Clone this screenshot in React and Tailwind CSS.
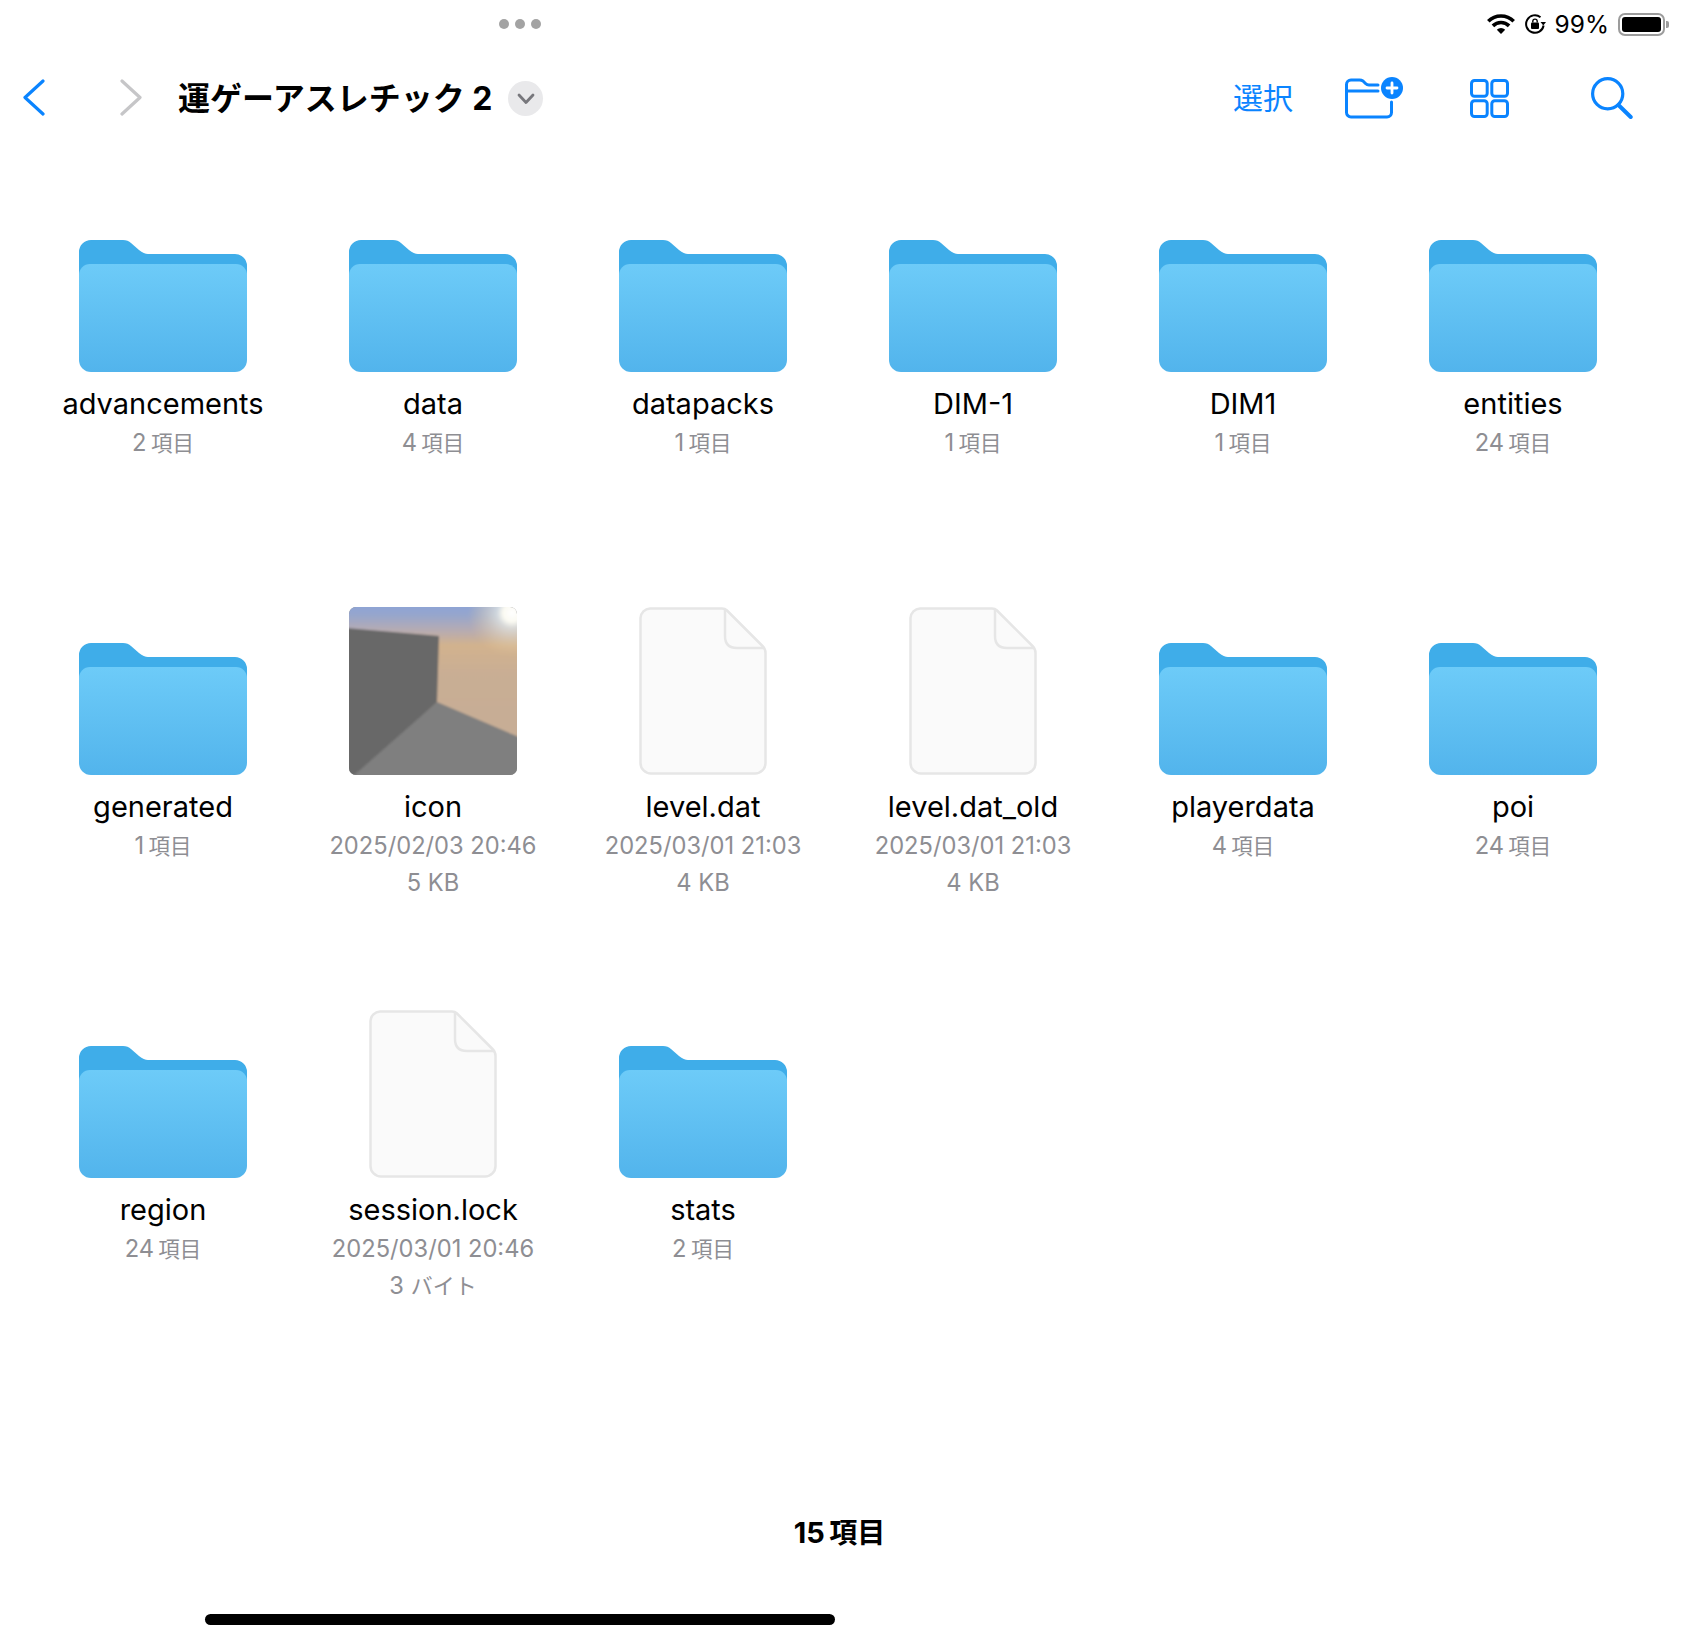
const SANS = "font-['Inter','Noto_Sans_CJK_JP',sans-serif]";

function Folder() {
  return (
    <svg width="168" height="132" viewBox="0 0 168 132">
      <defs>
        <linearGradient id="ff" x1="0" y1="0" x2="0" y2="1">
          <stop offset="0" stopColor="#6dcbf8" />
          <stop offset="1" stopColor="#52b4ec" />
        </linearGradient>
      </defs>
      <path d="M0 12 A12 12 0 0 1 12 0 H44 Q49 0 52 3 L60 10 Q65 14 69 14 H156 A12 12 0 0 1 168 26 V60 H0 Z" fill="#3fade9" />
      <path d="M0 35 A11 11 0 0 1 11 24 H157 A11 11 0 0 1 168 35 V120 A12 12 0 0 1 156 132 H12 A12 12 0 0 1 0 120 Z" fill="url(#ff)" />
    </svg>
  );
}

function Doc() {
  return (
    <svg width="128" height="168" viewBox="0 0 128 168">
      <path d="M11 1.5 H83 Q86 1.5 88 3.5 L123.5 39 Q126.5 42 126.5 46 V156 A10.5 10.5 0 0 1 116 166.5 H12 A10.5 10.5 0 0 1 1.5 156 V11 A10 10 0 0 1 11 1.5 Z" fill="#fafafa" stroke="#e6e6e6" strokeWidth="2.5" />
      <path d="M86 3 V29 Q86 41 98 41 H125" fill="none" stroke="#e6e6e6" strokeWidth="2.5" />
    </svg>
  );
}

function Thumb() {
  return (
    <svg width="168" height="168" viewBox="0 0 168 168" className="rounded-[7px]">
      <defs>
        <linearGradient id="bgsky" x1="0" y1="0" x2="0" y2="1">
          <stop offset="0" stopColor="#8aa3d8" />
          <stop offset="0.07" stopColor="#97a6cc" />
          <stop offset="0.15" stopColor="#b4abb4" />
          <stop offset="0.24" stopColor="#d2b28e" />
          <stop offset="0.4" stopColor="#c9ae94" />
          <stop offset="1" stopColor="#c5ad97" />
        </linearGradient>
        <radialGradient id="sun" cx="163" cy="6" r="44" gradientUnits="userSpaceOnUse">
          <stop offset="0" stopColor="#ffffff" />
          <stop offset="0.2" stopColor="#fbfaf2" />
          <stop offset="0.35" stopColor="#eef0e6" stopOpacity="0.65" />
          <stop offset="1" stopColor="#e8c890" stopOpacity="0" />
        </radialGradient>
        <filter id="bl"><feGaussianBlur stdDeviation="1" /></filter>
      </defs>
      <rect width="168" height="168" fill="#808080" />
      <g filter="url(#bl)">
        <rect x="-4" y="-4" width="176" height="176" fill="url(#bgsky)" />
        <rect x="-4" y="-4" width="176" height="90" fill="url(#sun)" />
        <polygon points="88,95 172,131 172,172 -4,172" fill="#7f7f7f" />
        <polygon points="-4,21 90,29 88,95 3,170 -4,172" fill="#676767" />
      </g>
    </svg>
  );
}

function Item({ name, kind, subs }) {
  return (
    <div className="h-[403px] flex flex-col items-center">
      <div className="h-[168px] flex items-end">
        {kind === "folder" && <Folder />}
        {kind === "doc" && <Doc />}
        {kind === "thumb" && <Thumb />}
      </div>
      <div className="mt-[14px] text-[29px] leading-[36px] text-black whitespace-nowrap">{name}</div>
      <div className="mt-[3px] flex flex-col items-center gap-[1px]">
        {subs.map((s, i) => (
          <div key={i} className="text-[23.7px] leading-[36px] text-[#8e8e93] whitespace-nowrap">{s}</div>
        ))}
      </div>
    </div>
  );
}

const K = (n) => (
  <>
    {n}&#8201;<span className="text-[21.5px]">項目</span>
  </>
);

const items = [
  ["advancements", "folder", [K("2")]],
  ["data", "folder", [K("4")]],
  ["datapacks", "folder", [K("1")]],
  ["DIM-1", "folder", [K("1")]],
  ["DIM1", "folder", [K("1")]],
  ["entities", "folder", [K("24")]],
  ["generated", "folder", [K("1")]],
  ["icon", "thumb", ["2025/02/03 20:46", "5 KB"]],
  ["level.dat", "doc", ["2025/03/01 21:03", "4 KB"]],
  ["level.dat_old", "doc", ["2025/03/01 21:03", "4 KB"]],
  ["playerdata", "folder", [K("4")]],
  ["poi", "folder", [K("24")]],
  ["region", "folder", [K("24")]],
  ["session.lock", "doc", ["2025/03/01 20:46", <>3 <span className="text-[22px]">バイト</span></>]],
  ["stats", "folder", [K("2")]],
];

export default function App() {
  return (
    <div className={`w-[1700px] h-[1640px] relative overflow-hidden bg-white ${SANS}`}>
      <div className="h-[48px] flex items-center">
        <div className="ml-[499px] flex gap-[6px]">
          <span className="w-[10px] h-[10px] rounded-full bg-[#a3a3a3]" />
          <span className="w-[10px] h-[10px] rounded-full bg-[#a3a3a3]" />
          <span className="w-[10px] h-[10px] rounded-full bg-[#a3a3a3]" />
        </div>
        <div className="ml-auto mr-[31px] flex items-center">
          <svg width="28" height="20" viewBox="0 0 28 20">
            <path d="M1.3 7.3 A18 18 0 0 1 26.7 7.3" fill="none" stroke="#000" strokeWidth="3.6" />
            <path d="M5.9 11.9 A11.5 11.5 0 0 1 22.1 11.9" fill="none" stroke="#000" strokeWidth="3.6" />
            <path d="M14 20 L9.8 15.8 A6 6 0 0 1 18.2 15.8 Z" fill="#000" />
          </svg>
          <svg width="21" height="20" viewBox="0 0 21 20" className="ml-[10px]">
            <path d="M15.5 3.2 A8.8 8.8 0 1 0 18.6 11.5" fill="none" stroke="#000" strokeWidth="2" />
            <path d="M15.5 8 L21 8 L18.3 11.5 Z" fill="#000" />
            <rect x="6" y="8.5" width="8" height="6.5" rx="1" fill="#000" />
            <path d="M7.8 8.5 V7.3 A2.2 2.2 0 0 1 12.2 7.3 V8.5" fill="none" stroke="#000" strokeWidth="1.4" />
          </svg>
          <span className="ml-[9px] text-[24.5px] leading-[30px] text-black">99%</span>
          <div className="ml-[9px] w-[47px] h-[23px] rounded-[7px] border-2 border-[#9c9c9c] p-[2px] flex">
            <div className="flex-1 bg-black rounded-[3px]" />
          </div>
          <div className="w-[3px] h-[7px] ml-[1px] rounded-r-[2px] bg-[#9c9c9c]" />
        </div>
      </div>

      <div className="h-[100px] flex items-center">
        <svg width="22" height="37" viewBox="0 0 22 37" className="ml-[23px] -mt-[1px]">
          <path d="M20 2 L2 18.5 L20 35" fill="none" stroke="#0a84ff" strokeWidth="3.2" strokeLinecap="round" strokeLinejoin="round" />
        </svg>
        <svg width="22" height="37" viewBox="0 0 22 37" className="ml-[75px] -mt-[1px]">
          <path d="M2 2 L20 18.5 L2 35" fill="none" stroke="#c6c6c8" strokeWidth="3.2" strokeLinecap="round" strokeLinejoin="round" />
        </svg>
        <div className="ml-[36px] mt-[1px] w-[315px] text-[32px] leading-[40px] font-bold text-black whitespace-nowrap">運ゲーアスレチック 2</div>
        <div className="ml-[15px] mt-[1px] w-[35px] h-[35px] rounded-full bg-[#e9e9eb] flex items-center justify-center">
          <svg width="18" height="12" viewBox="0 0 18 12">
            <path d="M2 2 L9 9.5 L16 2" fill="none" stroke="#77777c" strokeWidth="2.8" strokeLinecap="round" strokeLinejoin="round" />
          </svg>
        </div>
        <div className="ml-auto text-[30px] leading-[40px] text-[#0a84ff]">選択</div>
        <svg width="58" height="42" viewBox="0 0 58 42" className="ml-[52px]">
          <path d="M33 8 H24 Q22 8 20.5 6.5 L18 4 Q16.5 3 14.5 3 H6 A4.5 4.5 0 0 0 1.5 7.5 V35.5 A4.5 4.5 0 0 0 6 40 H42 A4.5 4.5 0 0 0 46.5 35.5 V25" fill="none" stroke="#0a84ff" strokeWidth="3" strokeLinecap="round" strokeLinejoin="round" />
          <path d="M2 14 H33" fill="none" stroke="#0a84ff" strokeWidth="3" strokeLinecap="round" />
          <circle cx="47" cy="11" r="11" fill="#0a84ff" />
          <path d="M47 6 V16 M42 11 H52" stroke="#fff" strokeWidth="2.8" strokeLinecap="round" />
        </svg>
        <svg width="39" height="39" viewBox="0 0 39 39" className="ml-[67px]">
          <rect x="1.5" y="1.5" width="15.7" height="15.7" rx="3" fill="none" stroke="#0a84ff" strokeWidth="3" />
          <rect x="21.8" y="1.5" width="15.7" height="15.7" rx="3" fill="none" stroke="#0a84ff" strokeWidth="3" />
          <rect x="1.5" y="21.8" width="15.7" height="15.7" rx="3" fill="none" stroke="#0a84ff" strokeWidth="3" />
          <rect x="21.8" y="21.8" width="15.7" height="15.7" rx="3" fill="none" stroke="#0a84ff" strokeWidth="3" />
        </svg>
        <svg width="42" height="42" viewBox="0 0 42 42" className="ml-[82px] mr-[67px]">
          <circle cx="16.7" cy="16.7" r="15.1" fill="none" stroke="#0a84ff" strokeWidth="3.2" />
          <path d="M27.7 28.2 L39.7 40" fill="none" stroke="#0a84ff" strokeWidth="4" strokeLinecap="round" />
        </svg>
      </div>

      <div className="mt-[56px] ml-[28px] grid grid-cols-[repeat(6,270px)]">
        {items.map(([n, k, s]) => (
          <Item key={n} name={n} kind={k} subs={s} />
        ))}
      </div>

      <div className="mt-[102px] w-[1679px] text-center text-[29px] leading-[36px] font-bold text-black">
        15&#8201;<span className="text-[28px]">項目</span>
      </div>
      <div className="absolute left-[205px] top-[1614px] w-[630px] h-[11px] rounded-full bg-black" />
    </div>
  );
}
